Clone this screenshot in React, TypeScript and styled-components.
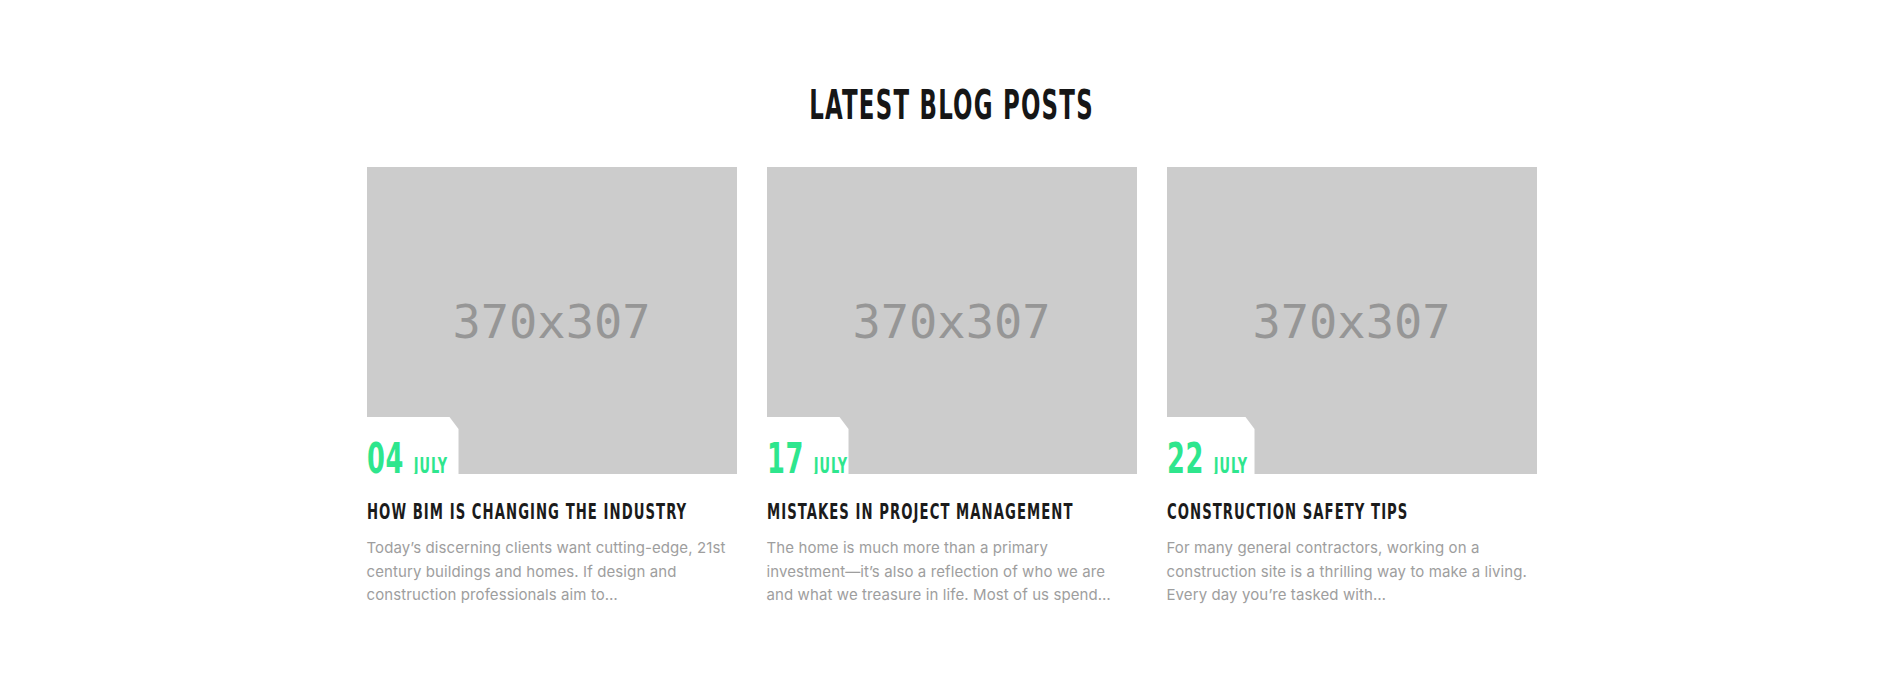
import React from "react";
import styled, { createGlobalStyle } from "styled-components";

const GlobalStyle = createGlobalStyle`
  html, body { margin: 0; padding: 0; background: #ffffff; }
  * { box-sizing: border-box; }
`;

const HEAD_FONT = `"DejaVu Sans Condensed", "Liberation Sans Narrow", "Roboto", sans-serif`;
const BODY_FONT = `"Inter", "Noto Sans", "Open Sans", sans-serif`;
const GREEN = "#2ee68d";

const Section = styled.section`
  padding: 84px 0 80px;
  display: flex;
  flex-direction: column;
  align-items: center;
`;

const Heading = styled.h2`
  margin: 0;
  font-family: ${HEAD_FONT};
  font-weight: 700;
  font-size: 41px;
  line-height: 42px;
  color: #161616;
  letter-spacing: 2px;
  transform: scaleX(0.62);
  transform-origin: center;
  white-space: nowrap;
`;

const Grid = styled.div`
  margin-top: 41px;
  width: 1170px;
  display: grid;
  grid-template-columns: repeat(3, 370px);
  column-gap: 30px;
`;

const Card = styled.article`
  display: flex;
  flex-direction: column;
`;

const Thumb = styled.div`
  position: relative;
  width: 370px;
  height: 307px;
  background: #cccccc;
  display: flex;
  align-items: center;
  justify-content: center;
`;

const Placeholder = styled.span`
  font-family: "DejaVu Sans Mono", "Liberation Mono", monospace;
  font-size: 47px;
  color: #969696;
  margin-top: 2px;
`;

const DateTag = styled.div<{ $w: number }>`
  position: absolute;
  left: 0;
  bottom: 0;
  width: ${(p) => p.$w}px;
  height: 57px;
  padding-top: 21px;
  background: #ffffff;
  clip-path: polygon(0 0, calc(100% - 9px) 0, 100% 12px, 100% 100%, 0 100%);
  font-family: ${HEAD_FONT};
  font-weight: 700;
  color: ${GREEN};
  white-space: nowrap;
  overflow: visible;
`;

const DateText = styled.div`
  display: flex;
  align-items: baseline;
  gap: 14px;
  transform: scaleX(0.68);
  transform-origin: left;
`;

const Day = styled.span`
  font-size: 42px;
  line-height: 1;
  letter-spacing: 1px;
`;

const Month = styled.span`
  font-size: 21px;
  line-height: 1;
  letter-spacing: 1.5px;
`;

const Title = styled.h3`
  margin: 28px 0 0;
  font-family: ${HEAD_FONT};
  font-weight: 700;
  font-size: 21px;
  line-height: 21px;
  color: #1b1b1b;
  letter-spacing: 1.5px;
  white-space: nowrap;
  transform: scaleX(0.7);
  transform-origin: left;
`;

const Excerpt = styled.p`
  margin: 13px 0 0;
  font-family: ${BODY_FONT};
  font-size: 15px;
  line-height: 23.5px;
  letter-spacing: 0.1px;
  color: #9e9e9e;
  white-space: nowrap;
`;

type Post = { day: string; month: string; w: number; title: string; lines: string[] };

const posts: Post[] = [
  {
    day: "04",
    month: "JULY",
    w: 92,
    title: "HOW BIM IS CHANGING THE INDUSTRY",
    lines: [
      "Today\u2019s discerning clients want cutting-edge, 21st",
      "century buildings and homes. If design and",
      "construction professionals aim to\u2026",
    ],
  },
  {
    day: "17",
    month: "JULY",
    w: 82,
    title: "MISTAKES IN PROJECT MANAGEMENT",
    lines: [
      "The home is much more than a primary",
      "investment\u2014it\u2019s also a reflection of who we are",
      "and what we treasure in life. Most of us spend\u2026",
    ],
  },
  {
    day: "22",
    month: "JULY",
    w: 88,
    title: "CONSTRUCTION SAFETY TIPS",
    lines: [
      "For many general contractors, working on a",
      "construction site is a thrilling way to make a living.",
      "Every day you\u2019re tasked with\u2026",
    ],
  },
];

export default function App() {
  return (
    <>
      <GlobalStyle />
      <Section>
        <Heading>LATEST BLOG POSTS</Heading>
        <Grid>
          {posts.map((p) => (
            <Card key={p.title}>
              <Thumb>
                <Placeholder>370x307</Placeholder>
                <DateTag $w={p.w}>
                  <DateText>
                    <Day>{p.day}</Day>
                    <Month>{p.month}</Month>
                  </DateText>
                </DateTag>
              </Thumb>
              <Title>{p.title}</Title>
              <Excerpt>
                {p.lines.map((l, i) => (
                  <React.Fragment key={i}>
                    {l}
                    {i < p.lines.length - 1 && <br />}
                  </React.Fragment>
                ))}
              </Excerpt>
            </Card>
          ))}
        </Grid>
      </Section>
    </>
  );
}
